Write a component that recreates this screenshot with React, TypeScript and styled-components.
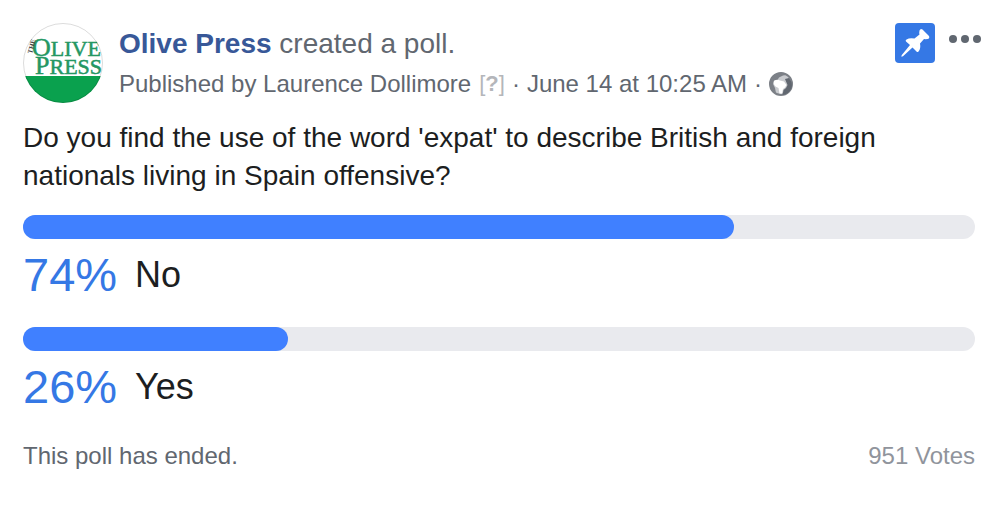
import React from "react";
import styled, { createGlobalStyle } from "styled-components";

const GlobalStyle = createGlobalStyle`
  body {
    margin: 0;
    background: #fff;
    color: #1c1e21;
    font-family: "Liberation Sans", Arial, Helvetica, sans-serif;
  }
`;

const Post = styled.article`
  padding: 23px 21px 0 23px;
`;

const Header = styled.header`
  display: flex;
  align-items: flex-start;
  gap: 16px;
`;

const Avatar = styled.svg`
  flex: none;
  width: 80px;
  height: 80px;
`;

const Heading = styled.div`
  flex: 1;
  min-width: 0;
`;

const Title = styled.h1`
  margin: 0;
  font-size: 28px;
  line-height: 42px;
  font-weight: 400;
  color: #616770;
`;

const PageLink = styled.a`
  font-weight: 700;
  color: #385898;
  text-decoration: none;
`;

const Meta = styled.div`
  display: flex;
  align-items: center;
  gap: 7px;
  font-size: 24px;
  line-height: 38px;
  color: #616770;
  white-space: nowrap;
`;

const Hint = styled.button`
  margin-left: 1px;
  padding: 0;
  border: 0;
  background: none;
  font: inherit;
  font-size: 22px;
  color: #b4b6ba;
`;

const Globe = styled.svg`
  width: 24px;
  height: 24px;
`;

const Actions = styled.div`
  display: flex;
  gap: 14px;
  margin-right: -6px;
`;

const PinButton = styled.button`
  width: 40px;
  height: 40px;
  padding: 0;
  border: 0;
  border-radius: 4px;
  background: #3578e5;
`;

const PinDrawing = styled.svg`
  display: block;
  width: 40px;
  height: 40px;
`;

const MenuButton = styled.button`
  display: flex;
  align-items: center;
  justify-content: center;
  gap: 4px;
  height: 32px;
  padding: 0;
  border: 0;
  background: none;
`;

const Dot = styled.span`
  width: 8px;
  height: 8px;
  border-radius: 50%;
  background: #606770;
`;

const Question = styled.p`
  margin: 16px 0 20px;
  font-size: 28px;
  line-height: 38px;
`;

const Options = styled.ul`
  display: grid;
  gap: 24px;
  margin: 0;
  padding: 0;
  list-style: none;
`;

const Track = styled.div`
  height: 24px;
  border-radius: 12px;
  background: #e9eaee;
`;

const Fill = styled.div<{ $share: number }>`
  width: calc((100% - 24px) * ${(p) => p.$share / 100} + 24px);
  height: 100%;
  border-radius: 12px;
  background: #4080ff;
`;

const Result = styled.div`
  display: flex;
  align-items: center;
  gap: 18px;
  box-sizing: border-box;
  height: 64px;
  padding-top: 7px;
`;

const Percent = styled.span`
  font-size: 47px;
  color: #3578e5;
`;

const Answer = styled.span`
  font-size: 36px;
`;

const Footer = styled.footer`
  display: flex;
  justify-content: space-between;
  margin-top: 24px;
  font-size: 24px;
  line-height: 34px;
  color: #616770;
`;

const Votes = styled.span`
  color: #90949c;
`;

const options = [
  { label: "No", share: 74 },
  { label: "Yes", share: 26 },
];

function OlivePressLogo() {
  return (
    <Avatar viewBox="0 0 80 80" role="img" aria-label="Olive Press">
      <defs>
        <clipPath id="disc">
          <circle cx="40" cy="40" r="40" />
        </clipPath>
      </defs>
      <g clipPath="url(#disc)">
        <rect width="80" height="80" fill="#fff" />
        <rect y="53" width="80" height="27" fill="#0aa14e" />
        <g
          fontFamily="Liberation Serif, Times New Roman, serif"
          fill="#249763"
          stroke="#249763"
          strokeWidth="0.5"
        >
          <text x="9" y="33" fontSize="26">
            O<tspan fontSize="22">LIVE</tspan>
          </text>
          <text x="12" y="51" fontSize="26">
            P<tspan fontSize="22">RESS</tspan>
          </text>
        </g>
        <text
          transform="translate(9 31) rotate(-75)"
          fontFamily="Liberation Serif, Times New Roman, serif"
          fontSize="7"
          fontWeight="700"
          fill="#444"
        >
          THE
        </text>
      </g>
      <circle cx="40" cy="40" r="39.5" fill="none" stroke="#000" strokeOpacity="0.14" />
    </Avatar>
  );
}

function PinIcon() {
  return (
    <PinDrawing viewBox="0 0 40 40" aria-hidden="true">
      <path
        d="M24.500 7.500Q25.500 5 27.500 6.500L34 13Q35 15.500 32.500 16Q30.500 16.300 29 16L25 20.500Q26 25.500 23.500 28.500Q22.500 29.500 21.500 28.500L17.500 24.500L8 33.200Q5.500 34.500 6.800 32L15 22L11 18.500Q10 17.300 11.500 16.500Q14.500 14.500 19.500 15.500L24.500 11.500Q24 9.500 24.500 7.500Z"
        fill="#fff"
      />
    </PinDrawing>
  );
}

function GlobeIcon() {
  return (
    <Globe viewBox="0 0 24 24" role="img" aria-label="Public">
      <circle cx="12" cy="12" r="11" fill="#c9cbcf" stroke="#7c8087" strokeWidth="2" />
      <path
        d="M2 8Q4 2 10 1Q15 0 18 3L14 3.500L10 5.500L8.500 8L5 8.500L4 12L6 16L7 21Q1 18 1 12Z"
        fill="#7c8087"
      />
      <path
        d="M5 9Q8 7 11 8.500L15 9.500L17.500 13L16 15.500L14 17L13 21.500L10.500 21.500L9.500 16L6.500 14.500Q4 12 5 9Z"
        fill="#fff"
      />
      <path
        d="M16 7L20 6Q24 11 22.500 16Q20 22 13.500 23L14.500 18L17 16L18.500 13Z"
        fill="#616770"
      />
    </Globe>
  );
}

export default function App() {
  return (
    <>
      <GlobalStyle />
      <Post>
        <Header>
          <OlivePressLogo />
          <Heading>
            <Title>
              <PageLink href="#page">Olive Press</PageLink> created a poll.
            </Title>
            <Meta>
              <span>Published by Laurence Dollimore</span>
              <Hint type="button" aria-label="About the publisher">
                [<b>?</b>]
              </Hint>
              <span>·</span>
              <time>June 14 at 10:25 AM</time>
              <span>·</span>
              <GlobeIcon />
            </Meta>
          </Heading>
          <Actions>
            <PinButton type="button" aria-label="Pinned post">
              <PinIcon />
            </PinButton>
            <MenuButton type="button" aria-label="More options">
              <Dot />
              <Dot />
              <Dot />
            </MenuButton>
          </Actions>
        </Header>
        <Question>
          Do you find the use of the word 'expat' to describe British and foreign nationals living
          in Spain offensive?
        </Question>
        <Options>
          {options.map((o) => (
            <li key={o.label}>
              <Track
                role="progressbar"
                aria-label={o.label}
                aria-valuenow={o.share}
                aria-valuemin={0}
                aria-valuemax={100}
              >
                <Fill $share={o.share} />
              </Track>
              <Result>
                <Percent>{o.share}%</Percent>
                <Answer>{o.label}</Answer>
              </Result>
            </li>
          ))}
        </Options>
        <Footer>
          <span>This poll has ended.</span>
          <Votes>951 Votes</Votes>
        </Footer>
      </Post>
    </>
  );
}
